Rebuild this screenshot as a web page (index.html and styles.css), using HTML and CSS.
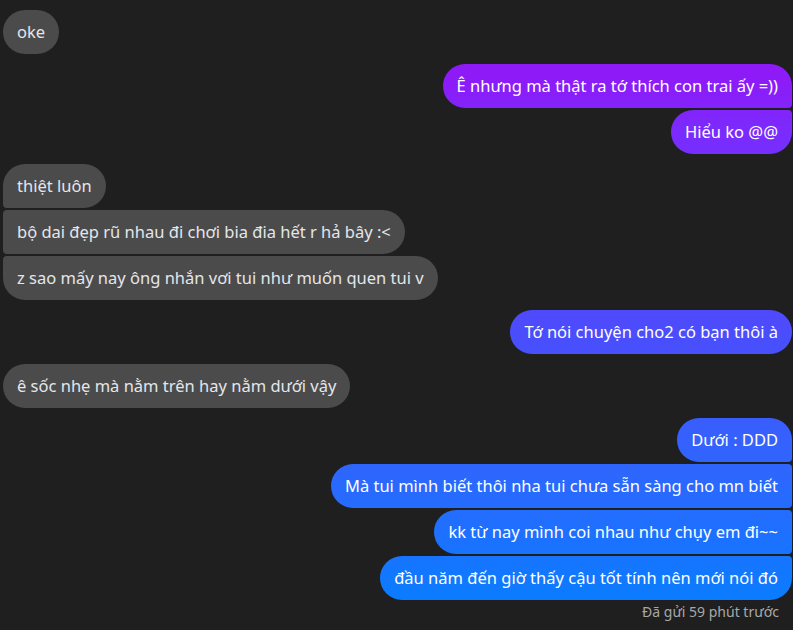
FILE: index.html
```html
<!DOCTYPE html>
<html lang="vi">
<head>
<meta charset="utf-8">
<title>Chat</title>
<link rel="stylesheet" href="styles.css">
</head>
<body>
<div class="chat">
  <div class="group in">
    <div class="bubble single">oke</div>
  </div>
  <div class="group out">
    <div class="bubble first">Ê nhưng mà thật ra tớ thích con trai ấy =))</div>
    <div class="bubble last">Hiểu ko @@</div>
  </div>
  <div class="group in">
    <div class="bubble first">thiệt luôn</div>
    <div class="bubble mid">bộ dai đẹp rũ nhau đi chơi bia đia hết r hả bây :&lt;</div>
    <div class="bubble last">z sao mấy nay ông nhắn vơi tui như muốn quen tui v</div>
  </div>
  <div class="group out">
    <div class="bubble single">Tớ nói chuyện cho2 có bạn thôi à</div>
  </div>
  <div class="group in">
    <div class="bubble single">ê sốc nhẹ mà nằm trên hay nằm dưới vậy</div>
  </div>
  <div class="group out">
    <div class="bubble first">Dưới : DDD</div>
    <div class="bubble mid">Mà tui mình biết thôi nha tui chưa sẵn sàng cho mn biết</div>
    <div class="bubble mid">kk từ nay mình coi nhau như chụy em đi~~</div>
    <div class="bubble last">đầu năm đến giờ thấy cậu tốt tính nên mới nói đó</div>
    <div class="status">Đã gửi 59 phút trước</div>
  </div>
</div>
</body>
</html>
```
FILE: styles.css
```css
html, body {
  margin: 0;
  padding: 0;
  background: #1f1f1f;
  height: 100%;
  overflow: hidden;
}
body {
  font-family: "Noto Sans", "Open Sans", sans-serif;
  font-size: 16.5px;
}
.chat {
  display: flex;
  flex-direction: column;
  gap: 10px;
  padding: 10px 1px 0 3px;
}
.group {
  display: flex;
  flex-direction: column;
  gap: 2px;
}
.group.in { align-items: flex-start; }
.group.out { align-items: flex-end; }
.bubble {
  box-sizing: border-box;
  height: 44px;
  line-height: 20px;
  padding: 12px 14px;
  white-space: nowrap;
  border-radius: 22px;
}
.in .bubble {
  background: #4b4b4b;
  color: #e4e6eb;
}
.out .bubble {
  color: #ffffff;
  background-image: linear-gradient(180deg, #9a10f5 0px, #8b1cf8 86px, #7a2bfd 132px, #4b4dfc 332px, #3561fd 440px, #1e70ff 532px, #0a7cff 600px, #0a7cff 630px);
  background-attachment: fixed;
}
.in .bubble.first { border-bottom-left-radius: 4px; }
.in .bubble.mid { border-top-left-radius: 4px; border-bottom-left-radius: 4px; }
.in .bubble.last { border-top-left-radius: 4px; }
.out .bubble.first { border-bottom-right-radius: 4px; }
.out .bubble.mid { border-top-right-radius: 4px; border-bottom-right-radius: 4px; }
.out .bubble.last { border-top-right-radius: 4px; }
.status {
  color: #a8a8a8;
  font-size: 14px;
  line-height: 17px;
  padding-top: 1px;
  padding-right: 13px;
}
```
